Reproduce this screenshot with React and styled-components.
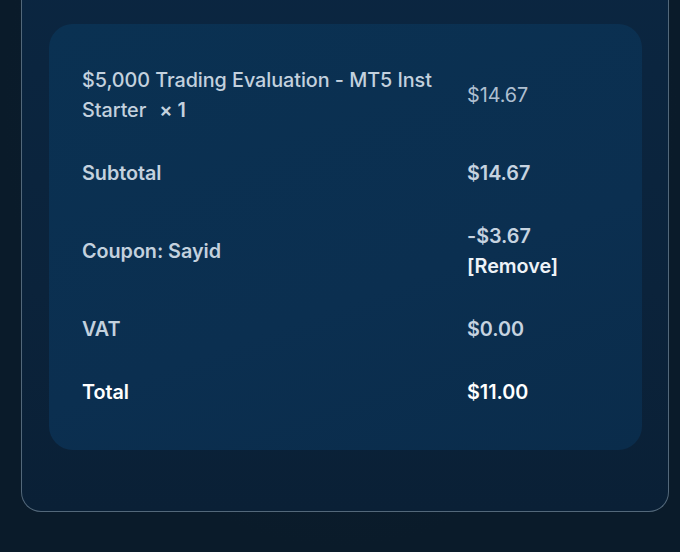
import React from "react"
import styled, { createGlobalStyle } from "styled-components"

const GlobalStyle = createGlobalStyle`
html, body {
  margin: 0;
  padding: 0;
  background: #0a1a29;
}
body {
  font-family: Inter, "Noto Sans", sans-serif;
}
`

const rows = [
    { label: "$5,000 Trading Evaluation - MT5 Inst Starter", qty: "× 1", value: ["$14.67"], kind: "item" },
    { label: "Subtotal", value: ["$14.67"], kind: "sub" },
    { label: "Coupon: Sayid", value: ["-$3.67"], remove: true, kind: "sub" },
    { label: "VAT", value: ["$0.00"], kind: "sub" },
    { label: "Total", value: ["$11.00"], kind: "total" },
]

export default function App() {
    return (
        <>
            <GlobalStyle />
            <Page>
                <Panel>
                    <Card>
                        <Table>
                            {rows.map((row, index) => (
                                <React.Fragment key={index}>
                                    <Label kind={row.kind}>
                                        <span>
                                            {row.label}
                                            {row.qty && <Qty>{row.qty}</Qty>}
                                        </span>
                                    </Label>
                                    <Value kind={row.kind}>
                                        {row.value.map((v) => (
                                            <span key={v}>{v}</span>
                                        ))}
                                        {row.remove && <RemoveLink href="#">[Remove]</RemoveLink>}
                                    </Value>
                                </React.Fragment>
                            ))}
                        </Table>
                    </Card>
                </Panel>
            </Page>
        </>
    )
}

const Page = styled.div`
width: 680px;
height: 552px;
overflow: hidden;
padding: 0 11px 0 21px;
box-sizing: border-box;
background: radial-gradient(ellipse at 50% 20%, #0d2236 0%, #0a1b2a 70%);
`

const Panel = styled.div`
margin-top: -40px;
height: 552px;
box-sizing: border-box;
border: 1px solid #53687a;
border-top: none;
border-radius: 0 0 20px 20px;
background: linear-gradient(180deg, #0b2641 0%, #0b233b 60%, #0a2036 100%);
padding: 64px 26px 0 27px;
`

const Card = styled.div`
background: linear-gradient(160deg, #0a3152 0%, #0b2f50 60%, #0a2c4b 100%);
border-radius: 24px;
padding: 24px 33px 27px 33px;
`

const Table = styled.div`
display: grid;
grid-template-columns: 385px 1fr;
`

const Cell = styled.div`
padding: 16.5px 0;
font-size: 19.8px;
line-height: 30px;
letter-spacing: -0.05px;
`

const Label = styled(Cell)`
padding-right: 12px;
display: flex;
align-items: center;
font-weight: ${(p) => (p.kind === "item" ? 500 : 600)};
color: ${(p) => (p.kind === "total" ? "#ffffff" : "#c3d1de")};
`

const Qty = styled.strong`
display: inline-block;
font-weight: 600;
margin-left: 13px;
`

const Value = styled(Cell)`
display: flex;
flex-direction: column;
justify-content: center;
font-weight: ${(p) => (p.kind === "item" ? 400 : 600)};
color: ${(p) => (p.kind === "total" ? "#ffffff" : p.kind === "item" ? "#aebfd0" : "#c6d3e0")};
`

const RemoveLink = styled.a`
color: #eef3f8;
text-decoration: none;
font-weight: 600;
`
